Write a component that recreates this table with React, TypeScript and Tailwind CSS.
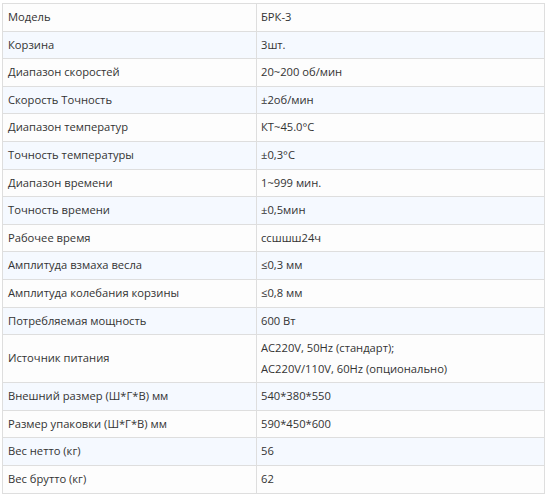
import React from 'react';

const rows: [string, string[]][] = [
  ['Модель', ['БРК-3']],
  ['Корзина', ['3шт.']],
  ['Диапазон скоростей', ['20~200 об/мин']],
  ['Скорость Точность', ['±2об/мин']],
  ['Диапазон температур', ['КТ~45.0°C']],
  ['Точность температуры', ['±0,3°C']],
  ['Диапазон времени', ['1~999 мин.']],
  ['Точность времени', ['±0,5мин']],
  ['Рабочее время', ['ссшшш24ч']],
  ['Амплитуда взмаха весла', ['≤0,3 мм']],
  ['Амплитуда колебания корзины', ['≤0,8 мм']],
  ['Потребляемая мощность', ['600 Вт']],
  ['Источник питания', ['AC220V, 50Hz (стандарт);', 'AC220V/110V, 60Hz (опционально)']],
  ['Внешний размер (Ш*Г*В) мм', ['540*380*550']],
  ['Размер упаковки (Ш*Г*В) мм', ['590*450*600']],
  ['Вес нетто (кг)', ['56']],
  ['Вес брутто (кг)', ['62']],
];

export default function App() {
  return (
    <div className="w-[548px] h-[497px] bg-white pt-[3px] pl-[2px] font-['Open_Sans',sans-serif] text-[11.2px] text-[#333]">
      <table className="w-[543px] border-collapse table-fixed">
        <colgroup>
          <col className="w-[254px]" />
          <col />
        </colgroup>
        <tbody>
          {rows.map(([label, values], i) => (
            <tr key={label} className={i % 2 === 1 ? 'bg-[#f5f9ff]' : 'bg-[#fdfdfd]'}>
              <td className="border border-[#dedede] pl-[5px] py-[3.1px] leading-[20.4px] align-middle">{label}</td>
              <td className="border border-[#dedede] pl-[4px] py-[3.1px] leading-[20.4px] align-middle">
                {values.map(v => (
                  <div key={v}>{v}</div>
                ))}
              </td>
            </tr>
          ))}
        </tbody>
      </table>
    </div>
  );
}
